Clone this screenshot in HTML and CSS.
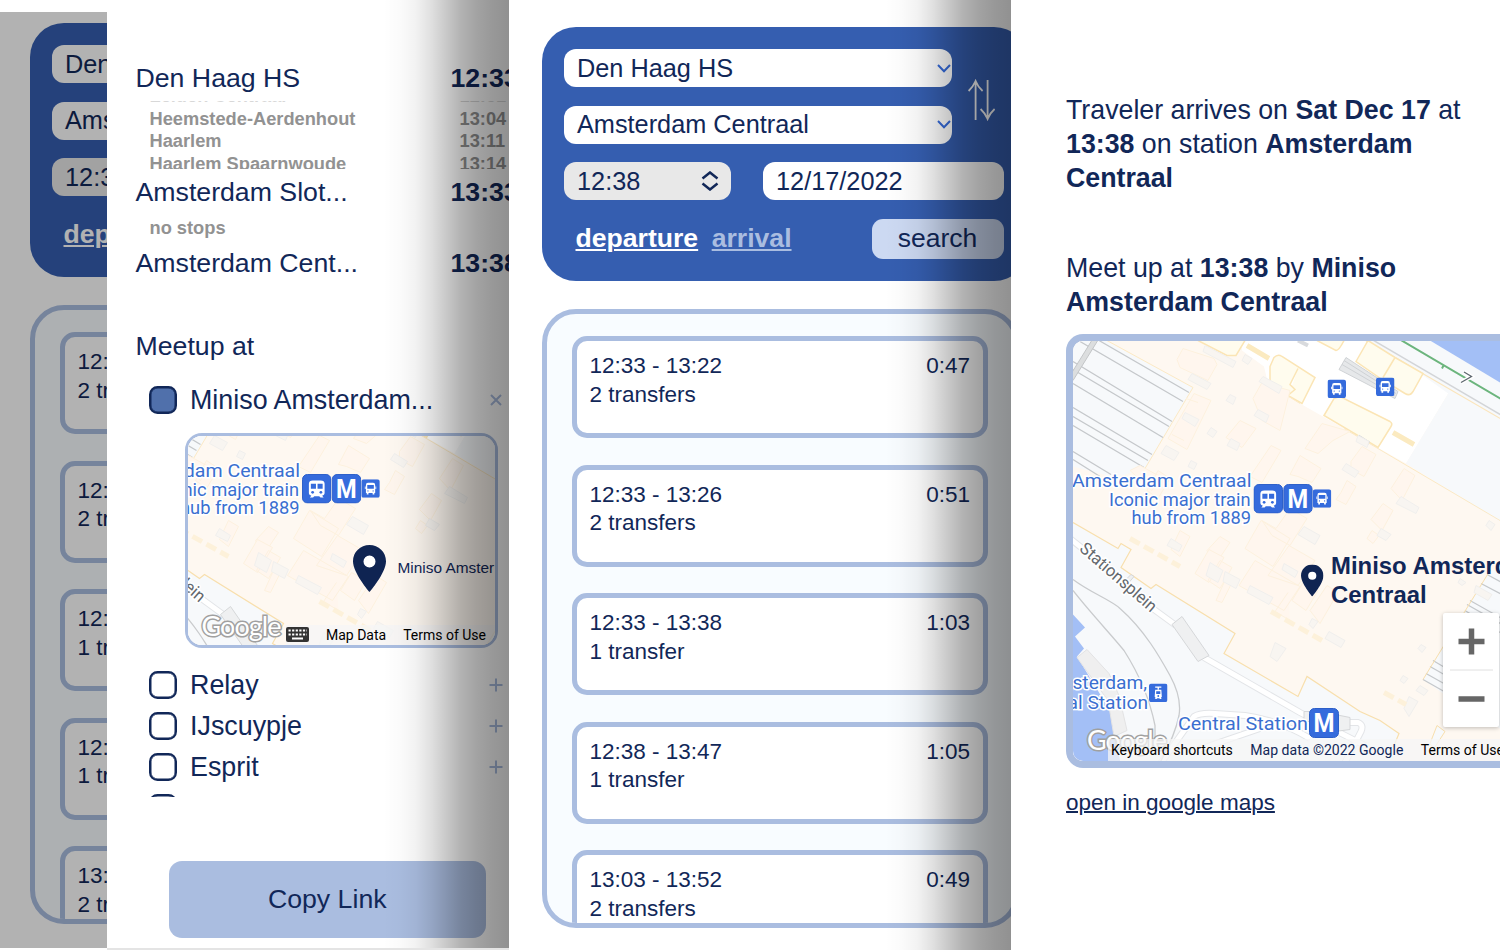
FILE: index.html
```html
<!DOCTYPE html>
<html lang="en">
<head>
<meta charset="utf-8">
<title>Train meetup</title>
<link rel="stylesheet" href="styles.css">
</head>
<body>
<svg class="defs" width="0" height="0" aria-hidden="true">
  <defs>
    <symbol id="bus" viewBox="0 0 18 18">
      <rect width="18" height="18" rx="2.5" fill="#356bdc"/>
      <path fill="#fff" d="M4.500 5.500Q4.500 3.300 6.500 3.300H11.500Q13.500 3.300 13.500 5.500V13.300H12.700V14.800H11V13.300H7V14.800H5.300V13.300H4.500Z"/>
      <path stroke="#fff" stroke-width=".8" d="M3.900 7V9.500M14.100 7V9.500"/>
      <path fill="#356bdc" d="M5.800 5.600H12.200V9.200H5.800Z"/>
      <circle cx="6.500" cy="11.300" r=".6" fill="#356bdc"/><circle cx="11.500" cy="11.300" r=".6" fill="#356bdc"/>
    </symbol>
    <symbol id="train" viewBox="0 0 30 30">
      <rect x=".5" y=".5" width="29" height="29" rx="5" fill="#356bdc" stroke="#2c5fc9"/>
      <path fill="#fff" d="M7 10Q7 6.500 11 6.500H19Q23 6.500 23 10V19.500Q23 21.500 20.500 22L22 24H18.800L17.500 22.500H12.500L11.200 24H8L9.500 22Q7 21.500 7 19.500Z"/>
      <path fill="#356bdc" d="M9 10H14.200V15H9ZM15.800 10H21V15H15.800Z"/>
      <circle cx="10.800" cy="18.600" r="1.400" fill="#356bdc"/><circle cx="19.200" cy="18.600" r="1.400" fill="#356bdc"/>
    </symbol>
    <symbol id="metro" viewBox="0 0 30 30">
      <rect x=".5" y=".5" width="29" height="29" rx="5" fill="#356bdc" stroke="#2c5fc9"/>
      <text class="metro-letter" x="15" y="24" text-anchor="middle" textLength="21" lengthAdjust="spacingAndGlyphs">M</text>
    </symbol>
    <symbol id="tram" viewBox="0 0 18 18">
      <rect width="18" height="18" rx="2.500" fill="#356bdc"/>
      <path fill="none" stroke="#fff" stroke-width="1.300" d="M6 3.600H12M9 3.600V6"/>
      <path fill="#fff" d="M6 6H12L12.500 13L11.500 14L12.500 15.200H10.700L10 14.300H8L7.300 15.200H5.500L6.500 14L5.500 13Z"/>
      <path fill="#356bdc" d="M7 7.500H11V10.300H7Z"/><circle cx="9" cy="12.200" r=".9" fill="#356bdc"/>
    </symbol>
    <symbol id="pin" viewBox="0 0 33 47">
      <circle cx="16.500" cy="16.500" r="8" fill="#fff"/>
      <path fill="#0f2452" fill-rule="evenodd" d="M16.500 0C7.400 0 0 7.200 0 16.200C0 28 16.500 47 16.500 47S33 28 33 16.200C33 7.200 25.600 0 16.500 0ZM16.500 22.500A6 6 0 1 1 16.500 10.500A6 6 0 0 1 16.500 22.500Z"/>
    </symbol>

    <g id="city">
      <rect x="1060" y="330" width="450" height="440" fill="#fef8f1"/>
      <path fill="#f7f9fb" d="M1073 340H1105L1193 387L1145 468L1115 477L1073 466Z"/>
      <path fill="none" stroke="#fbe9c5" d="M1107 340L1193 387L1145 468"/>
      <path class="rail" d="M1080 341L1183 401M1099 340L1189 392M1073 361L1172 421M1073 369L1169 426M1073 383L1163 437M1073 407L1152 454M1073 416L1148 460M1073 425L1144 467M1073 451L1111 474M1073 459L1100 476"/>
      <path stroke="#dcdedf" stroke-width="5" d="M1096 338L1070 380"/>
      <path stroke="#c3c5c7" fill="none" d="M1093 338L1067 380M1099 338L1073 380"/>

      <path fill="#fff" d="M1242 340H1374L1450 390L1406 463L1300 403L1268 383L1264 366L1242 350Z"/>
      <path fill="#f7f9fb" d="M1374 340L1500 415V521L1406 463L1450 390L1358 335H1500V430L1374 340Z"/>
      <path fill="#a3bff6" d="M1430 340L1500 382V340Z"/>
      <path stroke="#d3d5d8" stroke-width="1.500" d="M1372 339L1502 415"/>
      <path stroke="#fbe5bb" stroke-width="1.200" d="M1364 339L1502 419"/>
      <path stroke="#6cb57d" stroke-width="2" fill="none" d="M1400 339L1502 399M1444 364L1442 368"/>
      <path stroke="#fff" stroke-width="4" fill="none" d="M1464 371.500L1471.500 376L1461 382"/>
      <path stroke="#5f6870" stroke-width="1.300" fill="none" d="M1464 371.500L1471.500 376L1461 382"/>
      <path class="hall" d="M1356 361L1368 340L1395 357L1423 373L1413 391Q1410 396 1405 393L1382 379ZM1395 357L1383 377M1324 415L1334 398L1340 396L1390 421Q1393 423 1391 426L1378 447ZM1270 366L1274 357Q1278 353 1282 356L1315 377L1302 403L1270 385ZM1298 368L1290 384L1295 389L1289 394M1317 340L1336 350Q1339 350 1344 340M1198 340L1227 355H1236L1245 340"/>
      <path fill="#e6e8ea" stroke="#d0d3d6" d="M1346 357L1398 391L1395 398L1339 369Z"/>
      <path stroke="#cfd2d5" fill="none" d="M1344 360L1396 393M1342 364L1395 395"/>
      <path stroke="#fbeac0" stroke-width="5" d="M1393 432L1414 444M1247 345L1269 358"/>
      <path stroke="#d8dadd" stroke-width="4" d="M1298 340L1308 345M1358 436L1369 443"/>
      <path fill="none" stroke="#fbe9c5" d="M1268 383L1300 403M1344 428L1500 520"/>

      <path class="room" d="M1177 359L1183 348L1214 358L1217 364L1208 380L1180 367ZM1194 393L1211 400L1187 449L1168 438ZM1253 398L1262 382L1290 390L1280 430L1262 420ZM1240 420L1256 428L1242 447L1226 437ZM1305 448L1322 423L1350 431L1333 440L1318 453ZM1290 474L1300 455L1321 468L1312 482L1298 476ZM1351 461L1362 446L1376 454L1364 476L1351 469ZM1391 488L1404 468L1415 475L1402 500ZM1271 445L1281 450L1262 482L1250 476ZM1341 492L1347 480L1356 486L1346 504L1336 499ZM1180 530L1190 536L1180 556L1171 549ZM1207 550L1220 536L1230 542L1214 566ZM1371 519L1383 503L1393 510L1382 530ZM1367 538L1372 530L1379 535L1373 543Z"/>
      <path class="room" d="M1262 520L1276 528L1290 508L1307 518L1290 545L1272 535ZM1245 548L1261 520L1290 538L1273 566ZM1239 585L1255 560L1300 586L1284 610ZM1268 575L1289 545L1315 560L1298 585ZM1195 573L1209 549L1224 557L1209 582ZM1220 560L1232 567L1220 588L1208 580ZM1292 600L1303 582L1318 590L1306 610ZM1310 610L1327 585L1338 592L1320 623ZM1186 398L1198 402M1172 434L1184 440M1158 470L1170 478L1158 498L1147 490ZM1130 470L1140 465L1160 476L1152 490ZM1290 620L1275 611L1288 592M1216 600L1225 580L1231 584L1222 602Z"/>
      <path class="shaft" d="M1205 345L1236 361L1233 367L1203 351ZM1192 373L1211 383L1207 389L1188 379ZM1185 412L1199 419L1195 426L1182 418ZM1166 445L1179 452L1174 460L1161 453ZM1245 354L1252 358L1248 364L1242 360ZM1230 394L1236 397L1233 404L1226 400ZM1258 409L1269 415L1266 422L1254 415ZM1211 427L1217 431L1213 437L1207 433ZM1191 460L1197 463L1194 469L1188 466ZM1231 438L1240 443L1237 450L1227 445ZM1263 376L1282 386L1279 393L1259 381ZM1346 463L1359 471L1355 477L1342 469ZM1358 435L1369 441L1367 447L1356 441ZM1401 496L1419 507L1416 513L1396 503ZM1304 526L1320 535L1315 544L1298 534ZM1381 528L1391 534L1386 540L1377 535ZM1489 520L1495 524L1491 530L1486 525ZM1171 538L1182 545L1179 551L1167 545ZM1210 562L1223 570L1218 582L1206 575ZM1225 571L1240 579L1236 588L1223 581ZM1250 585L1273 597L1269 604L1247 592ZM1284 563L1298 571L1295 577L1282 569ZM1329 631L1345 640L1341 647L1325 638ZM1275 642L1286 648L1277 661L1270 656ZM1312 618L1318 621L1313 628L1309 624ZM1421 644L1426 647L1422 652L1418 648ZM1403 675L1408 678L1404 683L1400 680ZM1409 696L1418 701L1409 716L1404 708ZM1420 685L1428 690L1424 695L1416 690ZM1460 578L1466 582L1462 585L1458 582Z"/>
      <path stroke="#fdf1da" stroke-width="5" stroke-dasharray="11 5" fill="none" d="M1130 538L1180 566M1271 611L1322 640M1384 692L1406 704"/>

      <path fill="#f7f9fb" d="M1073 522L1118 548L1121 543L1131 549L1121 567L1151 588L1156 584L1235 633L1224 653L1298 696L1307 676L1360 711L1380 720L1399 733L1394 745V770H1060V515Z"/>
      <path fill="none" stroke="#f8dfad" stroke-width="1.200" d="M1073 522L1118 548L1121 543L1131 549L1121 567L1151 588L1156 584L1235 633L1224 653L1298 696L1307 676L1360 711L1380 720L1399 733L1394 745"/>
      <path fill="#f7f9fb" stroke="#f8dfad" d="M1430 743L1437 725L1445 731L1434 748Z"/>
      <path fill="#f7f9fb" d="M1500 570L1490 570L1423 679L1443 693L1500 728Z"/>
      <path class="rail" d="M1487 574L1502 582M1481 583L1502 594M1470 600L1502 618M1467 604L1502 624M1433 660L1460 676M1430 666L1460 683M1426 673L1460 692M1423 679L1460 700M1465 610L1500 632"/>
      <path fill="none" stroke="#f8dfad" d="M1490 570L1423 679"/>
      <path class="shaft" d="M1476 585L1492 594L1488 600L1474 592Z"/>

      <path fill="#a3bff6" d="M1073 614L1085 627L1075 636L1084 648L1077 656L1110 710L1122 770H1060V600Z"/>
      <path fill="#efefef" stroke="#e3e3e4" d="M1077 657L1087 649L1109 673L1119 695L1127 730L1114 736L1108 700Z"/>
      <path class="road-edge" d="M1060 530L1085 550M1150 606L1176 625M1204 657L1300 712L1365 745M1152 775L1194 716Q1200 712 1215 713L1245 715Q1280 720 1310 738M1340 722L1358 722Q1364 724 1361 731L1345 762M1190 752L1260 728"/>
      <path class="road" d="M1060 530L1085 550M1150 606L1176 625M1204 657L1300 712L1365 745M1152 775L1194 716Q1200 712 1215 713L1245 715Q1280 720 1310 738M1340 722L1358 722Q1364 724 1361 731L1345 762M1190 752L1260 728"/>
      <path fill="none" stroke="#c9cbcd" stroke-width="1.300" d="M1073 579C1090 592 1112 600 1120 608C1145 630 1160 657 1170 675Q1182 697 1179 715Q1175 735 1160 762M1073 590C1090 612 1112 635 1124 650C1140 675 1150 700 1155 725V750"/>
      <path fill="#eff0f1" stroke="#d5d7d9" d="M1172 624L1182 616L1209 655L1198 661ZM1335 714L1350 717V729L1335 731ZM1304 711H1312V721H1304ZM1126 579L1131 574L1134 576L1129 582Z"/>

      <g class="poi" text-anchor="end">
        <text x="1251.500" y="486.500" textLength="179.500" lengthAdjust="spacingAndGlyphs">Amsterdam Centraal</text>
        <text x="1250.500" y="505.300" textLength="141.500" lengthAdjust="spacingAndGlyphs">Iconic major train</text>
        <text x="1251" y="523.700" textLength="119.500" lengthAdjust="spacingAndGlyphs">hub from 1889</text>
        <text x="1147" y="688.500">Amsterdam,</text>
        <text x="1148" y="708.500">Centraal Station</text>
        <text x="1308" y="729" textLength="130" lengthAdjust="spacingAndGlyphs">Central Station</text>
      </g>
      <text class="street" transform="translate(1078.500 549.500) rotate(41)" textLength="96" lengthAdjust="spacingAndGlyphs">Stationsplein</text>
      <use href="#train" x="1253.500" y="483.500" width="29.500" height="29.500"/>
      <use href="#metro" x="1283.200" y="483.500" width="29.500" height="29.500"/>
      <use href="#bus" x="1312.800" y="488.800" width="18.500" height="18.500"/>
      <use href="#bus" x="1327.500" y="379" width="18.500" height="18.500"/>
      <use href="#bus" x="1376" y="377" width="18.500" height="18.500"/>
      <use href="#tram" x="1149" y="683" width="18.500" height="18.500"/>
      <use href="#metro" x="1309" y="707.500" width="30" height="30"/>
    </g>
  </defs>
</svg>

<main class="stage">
  <section class="screen screen-dimmed">
    <div class="planner">
      <div class="search-card">
        <div class="row"><div class="stations"><div class="field">Den Haag HS</div><div class="field">Amsterdam Centraal</div></div></div>
        <div class="row when"><div class="field time">12:38</div></div>
        <div class="row actions"><a class="mode">departure</a></div>
      </div>
      <div class="trips">
        <article class="trip"><div>12:33 - 13:22<br>2 transfers</div></article>
        <article class="trip"><div>12:33 - 13:26<br>2 transfers</div></article>
        <article class="trip"><div>12:33 - 13:38<br>1 transfer</div></article>
        <article class="trip"><div>12:38 - 13:47<br>1 transfer</div></article>
        <article class="trip"><div>13:03 - 13:52<br>2 transfers</div></article>
      </div>
    </div>
  </section>

  <section class="screen screen-detail">
    <div class="leg"><span>Den Haag HS</span><b>12:33</b></div>
    <div class="stops">
      <div class="stop"><span>Leiden Centraal</span><span>12:51</span></div>
      <div class="stop"><span>Heemstede-Aerdenhout</span><span>13:04</span></div>
      <div class="stop"><span>Haarlem</span><span>13:11</span></div>
      <div class="stop"><span>Haarlem Spaarnwoude</span><span>13:14</span></div>
    </div>
    <div class="leg leg-mid"><span>Amsterdam Slot...</span><b>13:33</b></div>
    <div class="stop none"><span>no stops</span></div>
    <div class="leg leg-end"><span>Amsterdam Cent...</span><b>13:38</b></div>
    <h2 class="heading">Meetup at</h2>
    <div class="places">
      <div class="place"><i class="check on"></i><span>Miniso Amsterdam...</span><svg class="sign" viewBox="0 0 14 14"><path d="M2 2L12 12M12 2L2 12"/></svg></div>
      <div class="map map-small">
        <svg class="map-art" viewBox="1139.500 445.500 307 209">
          <use href="#city"/>
          <use href="#pin" x="1304.500" y="554.500" width="33" height="47"/>
          <text class="pin-name" x="1349" y="582">Miniso Amster</text>
          <text class="logo" x="1153" y="645" textLength="80">Google</text>
        </svg>
        <div class="legal">
          <svg class="keys" viewBox="0 0 23 15"><rect width="23" height="15" rx="2" fill="#333"/><path stroke="#fff" stroke-width="2" stroke-dasharray="2.200 1.400" d="M2.500 3.500H21M2.500 7.500H21"/><path stroke="#fff" stroke-width="2" d="M6 11.500H17"/></svg>
          <span>Map Data</span><span>Terms of Use</span>
        </div>
      </div>
      <div class="place"><i class="check"></i><span>Relay</span><svg class="sign" viewBox="0 0 14 14"><path d="M7 .5V13.500M.5 7H13.500"/></svg></div>
      <div class="place"><i class="check"></i><span>IJscuypje</span><svg class="sign" viewBox="0 0 14 14"><path d="M7 .5V13.500M.5 7H13.500"/></svg></div>
      <div class="place"><i class="check"></i><span>Esprit</span><svg class="sign" viewBox="0 0 14 14"><path d="M7 .5V13.500M.5 7H13.500"/></svg></div>
      <div class="place"><i class="check"></i></div>
    </div>
    <div class="copy">Copy Link</div>
    <div class="shade"></div>
  </section>

  <section class="screen screen-search">
    <div class="planner">
      <div class="search-card">
        <div class="row">
          <div class="stations">
            <div class="field">Den Haag HS<svg class="caret" viewBox="0 0 14 9"><path d="M1 1L7 7.200L13 1"/></svg></div>
            <div class="field">Amsterdam Centraal<svg class="caret" viewBox="0 0 14 9"><path d="M1 1L7 7.200L13 1"/></svg></div>
          </div>
          <svg class="swap" viewBox="0 0 28 42"><path d="M7.600 41V1.500M.6 12Q5 8 7.600 2Q10 8 14.600 12M19.600 1V40.500M12.600 30Q17 34 19.600 40Q22 34 26.600 30"/></svg>
        </div>
        <div class="row when">
          <div class="field time">12:38<svg class="spin" viewBox="0 0 18 20"><path d="M1.500 7.500L9 1.500L16.500 7.500M1.500 12.500L9 18.500L16.500 12.500"/></svg></div>
          <div class="field date">12/17/2022</div>
        </div>
        <div class="row actions"><a class="mode">departure</a><a class="mode off">arrival</a><div class="go">search</div></div>
      </div>
      <div class="trips">
        <article class="trip"><div>12:33 - 13:22<br>2 transfers</div><time>0:47</time></article>
        <article class="trip"><div>12:33 - 13:26<br>2 transfers</div><time>0:51</time></article>
        <article class="trip"><div>12:33 - 13:38<br>1 transfer</div><time>1:03</time></article>
        <article class="trip"><div>12:38 - 13:47<br>1 transfer</div><time>1:05</time></article>
        <article class="trip"><div>13:03 - 13:52<br>2 transfers</div><time>0:49</time></article>
      </div>
    </div>
    <div class="shade"></div>
  </section>

  <section class="screen screen-share">
    <p class="note">Traveler arrives on <b>Sat Dec 17</b> at<br><b>13:38</b> on station <b>Amsterdam<br>Centraal</b></p>
    <p class="note meet">Meet up at <b>13:38</b> by <b>Miniso<br>Amsterdam Centraal</b></p>
    <div class="map map-large">
      <svg class="map-art" viewBox="1073 340.500 427 420">
        <use href="#city"/>
        <use href="#pin" x="1301" y="564" width="22.500" height="32"/>
        <text class="pin-title" x="1331" y="573">Miniso Amsterdam</text>
        <text class="pin-title" x="1331" y="602.500">Centraal</text>
        <text class="logo" x="1087" y="749" textLength="80">Google</text>
      </svg>
      <div class="legal"><span>Keyboard shortcuts</span><span class="data">Map data ©2022 Google</span><span>Terms of Use</span></div>
      <div class="zoom"><svg viewBox="0 0 57 114"><path stroke="#666" stroke-width="5.500" d="M15.500 28.500H41.500M28.500 15.500V41.500M15.500 86H41.500"/><path stroke="#e0e0e0" d="M7 57H50"/></svg></div>
    </div>
    <a class="open">open in google maps</a>
  </section>
</main>
</body>
</html>
```
FILE: styles.css
```css
* { box-sizing: border-box; }
body {
  margin: 0;
  width: 1500px;
  height: 950px;
  overflow: hidden;
  background: #fff;
  color: #112758;
  font-family: "Liberation Sans", Arial, sans-serif;
}
.defs { display: block; }
.stage { display: grid; grid-template-columns: 107px 402px 502px 489px; height: 950px; }
.screen { position: relative; height: 950px; overflow: hidden; background: #fff; }
.shade {
  position: absolute;
  inset: 0 0 0 auto;
  width: 126px;
  background: linear-gradient(90deg, rgba(0,0,0,0) 0, rgba(0,0,0,.015) 13%, rgba(0,0,0,.05) 26%, rgba(0,0,0,.12) 38%, rgba(0,0,0,.21) 50%, rgba(0,0,0,.3) 62%, rgba(0,0,0,.36) 74%, rgba(0,0,0,.405) 87%, rgba(0,0,0,.43) 100%);
}

/* Planner screen */
.planner { width: 486px; padding-top: 26.5px; margin-left: 32.5px; }
.search-card {
  display: flex; flex-direction: column; gap: 18.5px;
  height: 254.5px; padding: 22.5px 23px 22.5px 22.5px;
  border-radius: 34px; background: #355eb0;
}
.row { display: flex; align-items: center; }
.stations { display: flex; flex-direction: column; gap: 18.5px; width: 388px; }
.field {
  display: flex; align-items: center; justify-content: space-between;
  height: 38px; padding-left: 13px;
  border-radius: 12px; background: #fff;
  font-size: 25.3px; white-space: nowrap;
}
.caret { width: 14px; height: 9px; margin-right: 1px; fill: none; stroke: #356bdc; stroke-width: 2; }
.swap { width: 28px; height: 42px; margin: 7px 0 0 15.5px; fill: none; stroke: #fff; stroke-width: 1.8; }
.when { gap: 32px; }
.time { width: 167px; background: #e8e8e8; padding-right: 12px; }
.spin { width: 18px; height: 20px; fill: none; stroke: #112758; stroke-width: 2.5; }
.date { width: 241px; }
.actions { height: 40px; padding: 0 1px 0 11.5px; }
.mode { color: #fff; font-size: 26.600px; font-weight: bold; text-decoration: underline; text-decoration-thickness: 1.5px; text-underline-offset: 2px; }
.mode.off { margin-left: 13.5px; color: #aabde0; }
.go {
  width: 132px; height: 40px; margin-left: auto;
  border-radius: 11px; background: #ccd9f2;
  font-size: 26.500px; line-height: 39px; text-align: center;
}
.trips {
  width: 477px; height: 619px; margin-top: 28px; padding: 22px 25.500px 0 25.500px;
  overflow: hidden;
  border: 5.500px solid #aabde0; border-radius: 34px; background: #f8fcff;
}
.trip {
  display: flex; justify-content: space-between;
  height: 102px; margin-bottom: 26.500px; padding: 11.300px 13px 0 12.500px;
  border: 5.500px solid #aabde0; border-radius: 15px; background: #fff;
  font-size: 22.500px; line-height: 28.500px;
}

.screen-dimmed .planner { margin-left: 29.500px; padding-top: 22.500px; }
.screen-dimmed::after {
  content: ""; position: absolute; inset: 12px 0 2px;
  background: rgba(0,0,0,.3);
}

/* Journey detail screen */
.screen-detail { padding: 58px 0 0 28.500px; border-bottom: 2px solid #e4e4e4; }
.leg { display: flex; height: 40px; font-size: 26.700px; line-height: 40px; white-space: nowrap; }
.leg span { flex: none; width: 315px; }
.leg b { flex: none; }
.stops { height: 68px; margin-top: 3px; overflow: hidden; }
.stops .stop:first-child { margin-top: -16px; opacity: .35; }
.stop {
  display: flex; height: 22.600px; padding-left: 14px;
  color: #929292; font-size: 18.250px; font-weight: bold; line-height: 22.600px;
}
.stop span:first-child { width: 310px; }
.leg-mid { margin-top: 3px; }
.none { margin-top: 4.500px; }
.leg-end { margin-top: 3.500px; }
.heading { margin: 43px 0 14px; font-size: 26.700px; font-weight: normal; line-height: 40px; }
.places { height: 417px; padding-left: 13px; overflow: hidden; }
.place { display: flex; align-items: center; height: 41px; font-size: 26.850px; }
.check { width: 28px; height: 28px; border: 2.500px solid #112758; border-radius: 8.500px; box-shadow: inset 0 0 0 .5px #112758; }
.check.on { background: #5070ab; }
.place span { width: 299px; margin-left: 13.500px; padding-top: 1px; white-space: nowrap; }
.sign { width: 14px; height: 14px; fill: none; stroke: #aabde0; stroke-width: 2; }
.map { position: relative; overflow: hidden; border-style: solid; border-color: #aabde0; }
.map-art { display: block; width: 100%; height: 100%; }
.map-small { width: 313px; height: 215px; margin: 12px 0 17px 36.500px; border-width: 3px; border-radius: 17px; }
.legal {
  position: absolute; right: 0; bottom: 0;
  display: flex; align-items: center; justify-content: flex-end;
  height: 20px; background: rgba(245,245,245,.75);
  color: #000; font: 14px Roboto, sans-serif; white-space: nowrap;
}
.map-small .legal { gap: 17px; padding-right: 9px; }
.keys { width: 23px; height: 15px; }
.copy {
  width: 317.500px; height: 77.500px; margin: 64px 0 0 33px;
  border-radius: 13px; background: #aabde0;
  font-size: 26.700px; line-height: 77px; text-align: center;
}

/* Map lettering */
.rail { fill: none; stroke: #c5c8cb; stroke-width: 1.300; }
.hall { fill: #fffcee; stroke: #fbe5b5; stroke-width: 1.500; }
.room { fill: #fff6ee; stroke: #fdf1de; }
.shaft { fill: #f8f5f1; stroke: #f0efed; }
.road-edge { fill: none; stroke: #e3e5e8; stroke-width: 7; }
.road { fill: none; stroke: #fff; stroke-width: 5; }
.poi { fill: #3a6fd0; stroke: #fff; stroke-width: 3; paint-order: stroke; font: 19.200px Roboto, sans-serif; }
.street { fill: #63686d; stroke: #fff; stroke-width: 3; paint-order: stroke; font: 17px Roboto, sans-serif; }
.metro-letter { fill: #fff; font: bold 26px Roboto, sans-serif; }
.pin-name { fill: #112758; font-size: 15.400px; }
.pin-title { fill: #112758; font-size: 23.900px; font-weight: bold; }
.logo { fill: #fff; stroke: #a0a0a0; stroke-width: 3; paint-order: stroke; font: 27px Lato, sans-serif; }

/* Shared meetup screen */
.screen-share { padding: 94px 0 0 55px; }
.note { margin: 0; font-size: 26.750px; line-height: 33.800px; white-space: nowrap; }
.meet { margin-top: 56.600px; }
.map-large { width: 434px; height: 434px; margin-top: 14px; border-width: 7px 0 7px 7px; border-radius: 17px 0 0 17px; }
.map-large .legal { gap: 17.500px; width: 396px; right: -4px; height: 22px; font-size: 14.050px; }
.legal .data { color: #112758; }
.zoom {
  position: absolute; right: 1px; top: 272px;
  width: 56px; height: 114px; border-radius: 2px; background: #fff;
  box-shadow: 0 1px 4px rgba(0,0,0,.25);
}
.zoom svg { display: block; width: 57px; height: 114px; }
.open { display: block; margin-top: 21px; font-size: 22.500px; line-height: 27px; text-decoration: underline; text-decoration-thickness: 1.500px; }
```
